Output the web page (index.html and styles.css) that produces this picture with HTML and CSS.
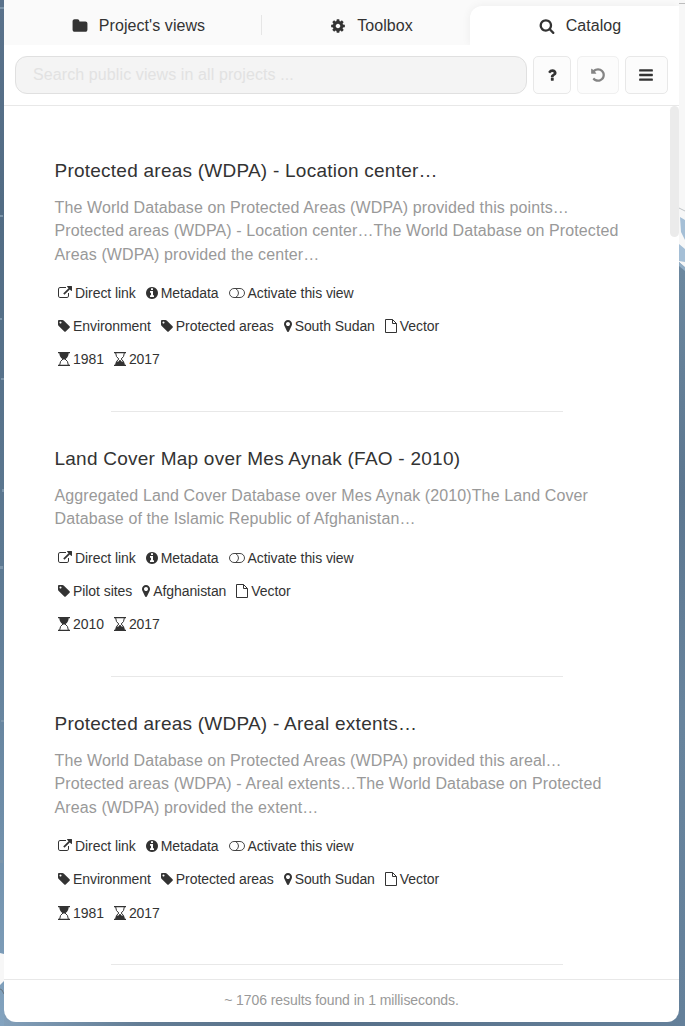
FILE: index.html
```html
<!DOCTYPE html>
<html lang="en">
<head>
<meta charset="utf-8">
<title>Catalog</title>
<link rel="stylesheet" href="styles.css">
</head>
<body>
<svg class="map" viewBox="0 0 685 1026" aria-hidden="true">
  <defs>
    <linearGradient id="west" x1="0" y1="0" x2="0" y2="1">
      <stop offset="0" stop-color="#5a728b"/><stop offset=".2" stop-color="#526c84"/>
      <stop offset=".55" stop-color="#5d7992"/><stop offset=".8" stop-color="#6f8ea9"/>
      <stop offset="1" stop-color="#83a3bf"/>
    </linearGradient>
    <linearGradient id="east" x1="0" y1="0" x2="0" y2="1">
      <stop offset="0" stop-color="#6c889f"/><stop offset=".3" stop-color="#5c768f"/>
      <stop offset=".6" stop-color="#68849d"/><stop offset="1" stop-color="#64809a"/>
    </linearGradient>
    <linearGradient id="south">
      <stop offset="0" stop-color="#829fb9"/><stop offset=".2" stop-color="#637d95"/>
      <stop offset=".45" stop-color="#566f88"/><stop offset="1" stop-color="#64809a"/>
    </linearGradient>
  </defs>
  <path fill="url(#west)" d="M0 0h20v1026H0z"/>
  <path fill="#7c95aa" d="M0 7h4v2H0zM0 215h3v2H0zM0 318h2v2H0zM1 378h3v2H1zM2 489h2v3H2zM0 566h3v3H0zM1 720h3v2H1zM0 860h3v3H0z"/>
  <path fill="#f7f7f7" d="M0 953l4 1v27l-4 4z"/>
  <path fill="none" stroke="#69747d" d="M0 989l2 1 2 4"/>
  <path fill="#f7f7f7" d="M660 0h25v270h-25z"/>
  <path fill="#bdbdbd" d="M678 3h7v1h-7z"/>
  <path fill="none" stroke="#bfc3c6" d="M679 208l6 3"/>
  <path fill="#a5bfd6" d="M680 217l5 3v20l-4-8zM679 244l6 5v13l-6-1z"/>
  <path fill="url(#east)" d="M665 262h14l6 6v758h-20z"/>
  <path fill="#91adc5" d="M679 262l6 5v4l-6-5z"/>
  <path fill="url(#south)" d="M4 1010h680v16H4z"/>
</svg>
<main class="panel">
  <nav class="tabs">
    <a class="tab"><svg class="fa tab-icon"><use href="#folder"/></svg>Project's views</a>
    <a class="tab tab-mid"><svg class="fa tab-icon"><use href="#cog"/></svg>Toolbox</a>
    <a class="tab tab-active"><svg class="fa tab-icon"><use href="#search"/></svg>Catalog</a>
  </nav>
  <div class="toolbar">
    <input class="search" type="text" placeholder="Search public views in all projects ...">
    <button class="btn btn-help"><svg class="fa"><use href="#question"/></svg></button>
    <button class="btn btn-reset"><svg class="fa"><use href="#undo"/></svg></button>
    <button class="btn btn-menu"><svg class="fa"><use href="#bars"/></svg></button>
  </div>
  <section class="results">
    <div class="scrollbar"></div>
    <article class="item">
      <h2 class="title">Protected areas (WDPA) - Location center…</h2>
      <p class="desc">The World Database on Protected Areas (WDPA) provided this points…<br>Protected areas (WDPA) - Location center…The World Database on Protected<br>Areas (WDPA) provided the center…</p>
      <div class="row">
        <span class="tag"><svg class="fa i14"><use href="#link"/></svg>Direct link</span>
        <span class="tag"><svg class="fa i12"><use href="#info"/></svg>Metadata</span>
        <span class="tag"><svg class="fa i16"><use href="#toggle"/></svg>Activate this view</span>
      </div>
      <div class="row">
        <span class="tag"><svg class="fa i12"><use href="#tag"/></svg>Environment</span>
        <span class="tag"><svg class="fa i12"><use href="#tag"/></svg>Protected areas</span>
        <span class="tag"><svg class="fa i8"><use href="#marker"/></svg>South Sudan</span>
        <span class="tag"><svg class="fa i12"><use href="#file"/></svg>Vector</span>
      </div>
      <div class="row">
        <span class="tag"><svg class="fa i12"><use href="#start"/></svg>1981</span>
        <span class="tag"><svg class="fa i12"><use href="#end"/></svg>2017</span>
      </div>
    </article>
    <article class="item">
      <h2 class="title">Land Cover Map over Mes Aynak (FAO - 2010)</h2>
      <p class="desc">Aggregated Land Cover Database over Mes Aynak (2010)The Land Cover<br>Database of the Islamic Republic of Afghanistan…</p>
      <div class="row">
        <span class="tag"><svg class="fa i14"><use href="#link"/></svg>Direct link</span>
        <span class="tag"><svg class="fa i12"><use href="#info"/></svg>Metadata</span>
        <span class="tag"><svg class="fa i16"><use href="#toggle"/></svg>Activate this view</span>
      </div>
      <div class="row">
        <span class="tag"><svg class="fa i12"><use href="#tag"/></svg>Pilot sites</span>
        <span class="tag"><svg class="fa i8"><use href="#marker"/></svg>Afghanistan</span>
        <span class="tag"><svg class="fa i12"><use href="#file"/></svg>Vector</span>
      </div>
      <div class="row">
        <span class="tag"><svg class="fa i12"><use href="#start"/></svg>2010</span>
        <span class="tag"><svg class="fa i12"><use href="#end"/></svg>2017</span>
      </div>
    </article>
    <article class="item">
      <h2 class="title">Protected areas (WDPA) - Areal extents…</h2>
      <p class="desc">The World Database on Protected Areas (WDPA) provided this areal…<br>Protected areas (WDPA) - Areal extents…The World Database on Protected<br>Areas (WDPA) provided the extent…</p>
      <div class="row">
        <span class="tag"><svg class="fa i14"><use href="#link"/></svg>Direct link</span>
        <span class="tag"><svg class="fa i12"><use href="#info"/></svg>Metadata</span>
        <span class="tag"><svg class="fa i16"><use href="#toggle"/></svg>Activate this view</span>
      </div>
      <div class="row">
        <span class="tag"><svg class="fa i12"><use href="#tag"/></svg>Environment</span>
        <span class="tag"><svg class="fa i12"><use href="#tag"/></svg>Protected areas</span>
        <span class="tag"><svg class="fa i8"><use href="#marker"/></svg>South Sudan</span>
        <span class="tag"><svg class="fa i12"><use href="#file"/></svg>Vector</span>
      </div>
      <div class="row">
        <span class="tag"><svg class="fa i12"><use href="#start"/></svg>1981</span>
        <span class="tag"><svg class="fa i12"><use href="#end"/></svg>2017</span>
      </div>
    </article>
  </section>
  <footer class="status">~ 1706 results found in 1 milliseconds.</footer>
</main>
<svg class="sprite" aria-hidden="true">
  <symbol id="folder" viewBox="0 0 1792 1792"><path d="M1728 608v704q0 92-66 158t-158 66h-1216q-92 0-158-66t-66-158v-960q0-92 66-158t158-66h320q92 0 158 66t66 158v32h672q92 0 158 66t66 158z"/></symbol>
  <symbol id="cog" viewBox="0 0 1792 1792"><path d="M1152 896q0-106-75-181t-181-75-181 75-75 181 75 181 181 75 181-75 75-181zm512-109v222q0 12-8 23t-20 13l-185 28q-19 54-39 91 35 50 107 138 10 12 10 25t-9 23q-27 37-99 108t-94 71q-12 0-26-9l-138-108q-44 23-91 38-16 136-29 186-7 28-36 28h-222q-14 0-24.5-8.500t-11.500-21.500l-28-184q-49-16-90-37l-141 107q-10 9-25 9-14 0-25-11-126-114-165-168-7-10-7-23 0-12 8-23 15-21 51-66.500t54-70.500q-27-50-41-99l-183-27q-13-2-21-12.500t-8-23.500v-222q0-12 8-23t19-13l186-28q14-46 39-92-40-57-107-138-10-12-10-24 0-10 9-23 26-36 98.500-107.500t94.500-71.500q13 0 26 10l138 107q44-23 91-38 16-136 29-186 7-28 36-28h222q14 0 24.500 8.500t11.500 21.500l28 184q49 16 90 37l142-107q9-9 24-9 13 0 25 10 129 119 165 170 7 8 7 22 0 12-8 23-15 21-51 66.500t-54 70.500q26 50 41 98l183 28q13 2 21 12.500t8 23.500z"/></symbol>
  <symbol id="search" viewBox="0 0 1792 1792"><path d="M1216 832q0-185-131.500-316.500t-316.500-131.500-316.500 131.500-131.500 316.500 131.500 316.500 316.500 131.500 316.500-131.500 131.500-316.500zm512 832q0 52-38 90t-90 38q-54 0-90-38l-343-342q-179 124-399 124-143 0-273.500-55.500t-225-150-150-225-55.500-273.500 55.500-273.500 150-225 225-150 273.500-55.500 273.500 55.500 225 150 150 225 55.500 273.500q0 220-124 399l343 343q37 37 37 90z"/></symbol>
  <symbol id="question" viewBox="0 0 1792 1792"><path d="M1088 1256v240q0 16-12 28t-28 12h-240q-16 0-28-12t-12-28v-240q0-16 12-28t28-12h240q16 0 28 12t12 28zm316-600q0 54-15.500 101t-35 76.500-55 59.500-57.500 43.500-61 35.500q-41 23-68.500 65t-27.500 67q0 17-12 32.500t-28 15.500h-240q-15 0-25.500-18.500t-10.500-37.500v-45q0-83 65-156.500t143-108.500q59-27 84-56t25-76q0-42-46.500-74t-107.500-32q-65 0-108 29-35 25-107 115-13 16-31 16-12 0-25-8l-164-125q-13-10-15.500-25t5.500-28q160-266 464-266 80 0 161 31t146 83 106 127.500 41 158.500z"/></symbol>
  <symbol id="undo" viewBox="0 0 1792 1792"><path d="M1664 896q0 156-61 298t-164 245-245 164-298 61q-172 0-327-72.500t-264-204.500q-7-10-6.500-22.500t8.500-20.500l137-138q10-9 25-9 16 2 23 12 73 95 179 147t225 52q104 0 198.500-40.500t163.500-109.500 109.500-163.500 40.500-198.500-40.500-198.500-109.500-163.500-163.500-109.500-198.500-40.500q-98 0-188 35.500t-160 101.500l137 138q31 30 14 69-17 40-59 40h-448q-26 0-45-19t-19-45v-448q0-42 40-59 39-17 69 14l130 129q107-101 244.500-156.500t284.500-55.500q156 0 298 61t245 164 164 245 61 298z"/></symbol>
  <symbol id="bars" viewBox="0 0 1792 1792"><path d="M192 256h1408q64 0 64 64v128q0 64-64 64H192q-64 0-64-64V320q0-64 64-64zM192 768h1408q64 0 64 64v128q0 64-64 64H192q-64 0-64-64V832q0-64 64-64zM192 1280h1408q64 0 64 64v128q0 64-64 64H192q-64 0-64-64v-128q0-64 64-64z"/></symbol>
  <symbol id="link" viewBox="0 0 1792 1792"><path d="M1408 928v320q0 119-84.500 203.500t-203.500 84.500h-832q-119 0-203.500-84.500t-84.500-203.500v-832q0-119 84.500-203.500t203.500-84.500h704q14 0 23 9t9 23v64q0 14-9 23t-23 9h-704q-66 0-113 47t-47 113v832q0 66 47 113t113 47h832q66 0 113-47t47-113v-320q0-14 9-23t23-9h64q14 0 23 9t9 23zm384-864v512q0 26-19 45t-45 19-45-19l-176-176-652 652q-10 10-23 10t-23-10l-114-114q-10-10-10-23t10-23l652-652-176-176q-19-19-19-45t19-45 45-19h512q26 0 45 19t19 45z"/></symbol>
  <symbol id="info" viewBox="128 0 1536 1792"><path d="M1152 1376v-160q0-14-9-23t-23-9h-96v-512q0-14-9-23t-23-9h-320q-14 0-23 9t-9 23v160q0 14 9 23t23 9h96v320h-96q-14 0-23 9t-9 23v160q0 14 9 23t23 9h448q14 0 23-9t9-23zm-128-896v-160q0-14-9-23t-23-9h-192q-14 0-23 9t-9 23v160q0 14 9 23t23 9h192q14 0 23-9t9-23zm640 416q0 209-103 385.500t-279.500 279.500-385.500 103-385.500-103-279.500-279.500-103-385.500 103-385.500 279.500-279.500 385.500-103 385.500 103 279.500 279.500 103 385.500z"/></symbol>
  <symbol id="toggle" viewBox="0 0 16 14"><path fill="none" stroke="currentColor" stroke-width=".9" d="M5 2.500h6a4.500 4.500 0 0 1 0 9H5a4.500 4.500 0 0 1 0-9zM6.500 2.500q3 1.500 3 4.500t-3 4.500"/></symbol>
  <symbol id="tag" viewBox="128 0 1536 1792"><path d="M576 448q0-53-37.500-90.500t-90.500-37.500-90.500 37.500-37.500 90.500 37.500 90.500 90.500 37.500 90.500-37.500 37.500-90.500zm1067 576q0 53-37 90l-491 492q-39 37-91 37-53 0-90-37l-715-716q-38-37-64.500-101t-26.500-117v-416q0-52 38-90t90-38h416q53 0 117 26.500t102 64.500l715 714q37 39 37 91z"/></symbol>
  <symbol id="marker" viewBox="384 0 1024 1792"><path d="M1152 640q0-106-75-181t-181-75-181 75-75 181 75 181 181 75 181-75 75-181zm256 0q0 109-33 179l-364 774q-16 33-47.500 52t-67.500 19-67.500-19-46.500-52l-365-774q-33-70-33-179 0-212 150-362t362-150 362 150 150 362z"/></symbol>
  <symbol id="file" viewBox="0 0 12 14"><path fill="none" stroke="currentColor" d="M.5.500h7l4 4v9H.5zM7.500.500v4h4"/></symbol>
  <symbol id="start" viewBox="0 0 12 14"><path d="M0 0h12v1.200H0zM0 12.800h12V14H0zM1.300 1h9.400Q10.500 5 7.500 7h-3Q1.500 5 1.300 1z"/><path fill="none" stroke="currentColor" d="M1.700 13Q1.700 9 5 7h2Q10.300 9 10.300 13"/></symbol>
  <symbol id="end" viewBox="0 0 12 14"><path d="M0 0h12v1.200H0zM0 12.800h12V14H0zM1.500 13Q1.500 11 2.500 9.500h2L5.500 8h1l1 1.500h2Q10.500 11 10.500 13z"/><path fill="none" stroke="currentColor" d="M1.700 1Q1.700 5 4.800 7 1.700 9 1.700 13M10.300 1Q10.300 5 7.200 7 10.300 9 10.300 13"/></symbol>
</svg>
</body>
</html>
```
FILE: styles.css
```css
* { box-sizing: border-box; }
body {
  margin: 0;
  height: 1026px;
  overflow: hidden;
  padding: 0 6px 4px 4px;
  font-family: "Liberation Sans", Arial, sans-serif;
  color: #333;
}
.map { position: absolute; inset: 0; width: 685px; height: 1026px; z-index: -1; }
.sprite { position: absolute; width: 0; height: 0; }
.fa { display: block; flex: none; width: 16px; height: 16px; fill: currentColor; }
.panel {
  display: flex;
  flex-direction: column;
  height: 1022px;
  background: #fff;
  border-radius: 0 0 12px 12px;
  overflow: hidden;
}
.tabs {
  display: flex;
  flex: none;
  height: 45px;
  padding-top: 6px;
  background: #fafafa;
}
.tab {
  display: flex;
  align-items: center;
  justify-content: center;
  width: 257px;
  height: 39px;
  padding-left: 12px;
  font-size: 16px;
  letter-spacing: .07px;
}
.tab-mid {
  width: 209px;
  padding-left: 12px;
  background: linear-gradient(#e6e6e6, #e6e6e6) 0 9px / 1px 20px no-repeat;
}
.tab-active {
  width: 209px;
  padding-left: 11px;
  background: #fff;
  border-radius: 12px 0 0 0;
  box-shadow: 0 0 10px rgba(0, 0, 0, .06);
}
.tab-icon { margin-right: 11px; }
.toolbar {
  display: flex;
  flex: none;
  height: 61px;
  padding: 11px;
  border-bottom: 1px solid #e8e8e8;
  background: #fff;
  position: relative;
}
.search {
  width: 512px;
  height: 38px;
  padding: 0 17px;
  border: 1px solid #e0e0e0;
  border-radius: 12px;
  background: #f4f4f4;
  font: 16px "Liberation Sans", Arial, sans-serif;
  letter-spacing: .1px;
}
.search::placeholder { color: #e2e2e2; opacity: 1; }
.btn {
  display: flex;
  align-items: center;
  justify-content: center;
  height: 38px;
  padding: 0 0 1px;
  border: 1px solid #e8e8e8;
  border-radius: 5px;
  background: #fcfcfc;
  color: #333;
}
.btn-help { width: 38px; margin-left: 6px; }
.btn-reset { width: 42px; margin-left: 6px; color: #858585; border-color: #f0f0f0; }
.btn-menu { width: 43px; margin-left: 6px; padding-right: 1px; }
.results {
  position: relative;
  flex: 1;
  min-height: 0;
  overflow: hidden;
  padding: 51px 0 0 50.5px;
}
.scrollbar {
  position: absolute;
  top: 0;
  right: 0;
  width: 9px;
  height: 131px;
  border-radius: 5px;
  background: #ebebeb;
}
.item {
  width: 565px;
  padding-bottom: 36px;
  margin-bottom: 33.2px;
  background: linear-gradient(#e8e8e8, #e8e8e8) 56.5px 100% / 452px 1px no-repeat;
}
.title {
  margin: 0 0 10.9px;
  font-size: 19px;
  font-weight: 400;
  line-height: 28px;
  letter-spacing: .24px;
  white-space: nowrap;
}
.desc {
  margin: 0 0 10.6px;
  font-size: 16px;
  line-height: 23.33px;
  letter-spacing: .11px;
  color: #999;
  white-space: nowrap;
}
.row { display: flex; gap: 10px; height: 33.2px; padding-left: 3.5px; }
.tag { display: flex; align-items: center; gap: 3px; font-size: 14px; letter-spacing: -.07px; white-space: nowrap; }
.i8 { width: 8px; height: 14px; }
.i12 { width: 12px; height: 14px; }
.i14 { width: 14px; height: 14px; }
.i16 { width: 16px; height: 14px; }
.status {
  flex: none;
  height: 43px;
  border-top: 1px solid #e8e8e8;
  font-size: 14px;
  line-height: 41px;
  letter-spacing: -.08px;
  text-align: center;
  color: #999;
}
```
